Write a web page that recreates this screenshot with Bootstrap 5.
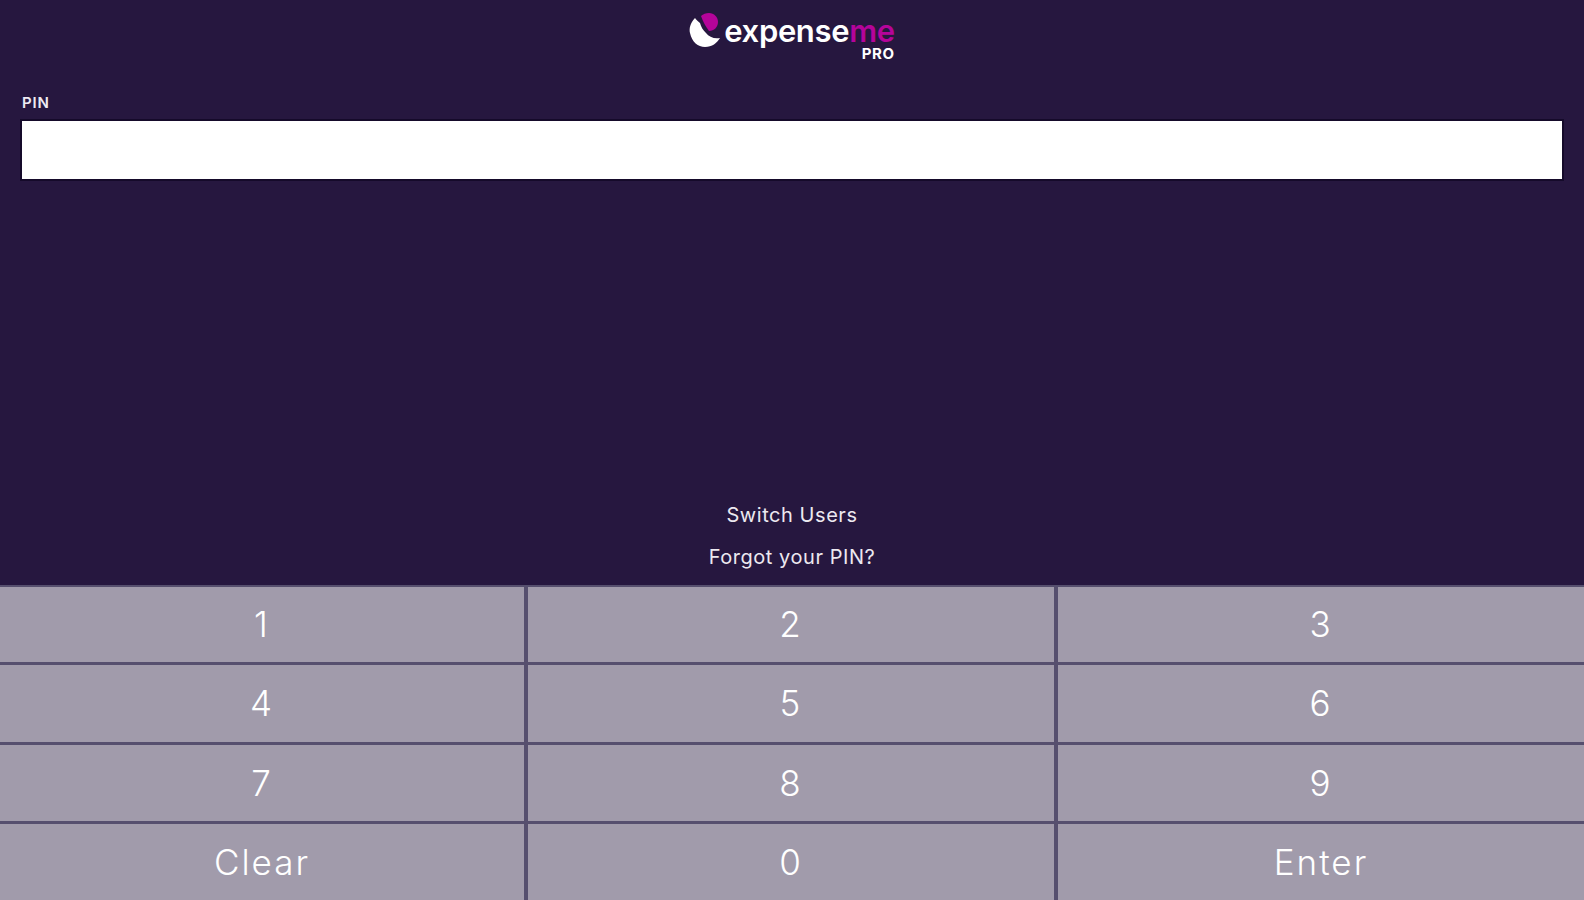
<!DOCTYPE html>
<html lang="en">
<head>
  <meta charset="UTF-8">
  <meta name="viewport" content="width=device-width, initial-scale=1.0">
  <title>ExpenseMe Pro</title>
  <link href="https://cdn.jsdelivr.net/npm/bootstrap@5.3.0/dist/css/bootstrap.min.css" rel="stylesheet">
  <style>
    html, body { height: 100%; }
    body {
      background-color: #26173f;
      color: #fff;
      font-family: "Inter", "Liberation Sans", sans-serif;
      overflow: hidden;
    }
    .login-screen { height: 900px; }
    .brand-bar { height: 89px; padding-top: 12px; }
    .brand-logo { gap: 3px; }
    .brand-name { font-size: 31px; line-height: 34px; font-weight: 600; letter-spacing: -.35px; margin-top: 2px; }
    .brand-me { color: #b5049a; }
    .brand-pro { font-size: 15px; line-height: 12px; font-weight: 700; letter-spacing: .6px; }
    .pin-area { padding: 6px 22px 0 22px; }
    .pin-label { font-size: 15px; line-height: 16px; font-weight: 600; letter-spacing: .8px; margin-bottom: 10px; color: #eeeaf2; }
    .pin-input {
      height: 58px;
      border: 0;
      border-radius: 0;
      box-shadow: 0 0 0 2px #150a2a;
    }
    .pin-links { padding-bottom: 15px; gap: 17px; }
    .pin-link { color: #ece9f0; font-size: 20px; line-height: 25px; letter-spacing: .55px; text-decoration: none; }
    .keypad {
      display: grid;
      grid-template-columns: 524px 526px 1fr;
      grid-template-rows: 75px 77px 76px 1fr;
      gap: 3px 4px;
      height: 315px;
      background-color: #564f6e;
      border-top: 2px solid #564f6e;
    }
    .key {
      background-color: #a19bab;
      border: 0;
      border-radius: 0;
      color: #fff;
      font-size: 35px;
      font-weight: 300;
      letter-spacing: 2px;
      line-height: 1;
    }
    .key:hover, .key:active { background-color: #928ba0 !important; color: #fff !important; }
  </style>
</head>
<body>
<div class="login-screen d-flex flex-column">
  <header class="brand-bar d-flex justify-content-center">
    <div class="brand-logo d-flex align-items-start">
      <svg width="32" height="36" viewBox="0 0 32 36">
        <path d="M6 6 C1 11 0 17 1 21 C3 30 9 35 16 35 C23 35 28 31 31 26 C25 27 20 25 17 21 C14 18 12 15 11 11 C9 9 7 8 6 6Z" fill="#fff"/>
        <path d="M12 4 C14 2 17 1 20 1 C25 1 29 5 29 10 C29 15 25 19 20 19 C17 15 14 10 12 4Z" fill="#b5049a"/>
      </svg>
      <div class="d-flex flex-column align-items-end">
        <div class="brand-name">expense<span class="brand-me">me</span></div>
        <div class="brand-pro">PRO</div>
      </div>
    </div>
  </header>

  <section class="pin-area">
    <label class="pin-label d-block" for="pin">PIN</label>
    <input class="form-control pin-input" id="pin" type="password">
  </section>

  <div class="pin-links flex-grow-1 d-flex flex-column justify-content-end align-items-center">
    <a class="pin-link" href="#">Switch Users</a>
    <a class="pin-link" href="#">Forgot your PIN?</a>
  </div>

  <div class="keypad">
    <button class="btn key">1</button>
    <button class="btn key">2</button>
    <button class="btn key">3</button>
    <button class="btn key">4</button>
    <button class="btn key">5</button>
    <button class="btn key">6</button>
    <button class="btn key">7</button>
    <button class="btn key">8</button>
    <button class="btn key">9</button>
    <button class="btn key">Clear</button>
    <button class="btn key">0</button>
    <button class="btn key">Enter</button>
  </div>
</div>
<script src="https://cdn.jsdelivr.net/npm/bootstrap@5.3.0/dist/js/bootstrap.bundle.min.js"></script>
</body>
</html>
